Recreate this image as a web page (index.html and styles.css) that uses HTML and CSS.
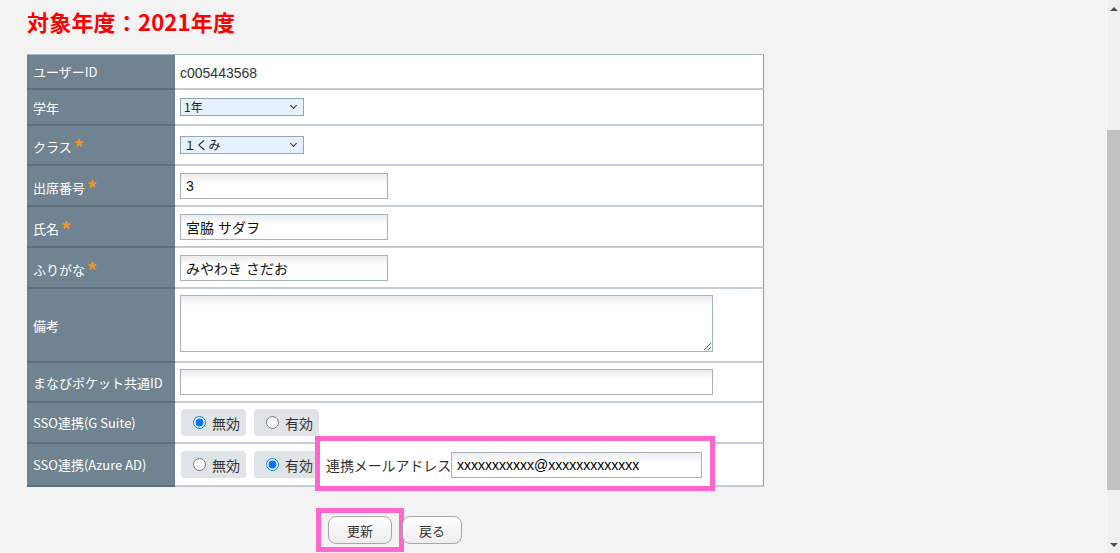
FILE: index.html
```html
<!DOCTYPE html>
<html lang="ja">
<head>
    <meta charset="UTF-8">
    <meta name="viewport" content="width=device-width, initial-scale=1.0">
    <title>生徒情報の編集</title>
    <link rel="stylesheet" href="styles.css">
</head>
<body>
    <div class="screen">
        <div class="page">
            <h1 class="year-title">対象年度：2021年度</h1>
            <form class="student-form">
                <table class="edit-table">
                    <tr class="h35">
                        <th>ユーザーID</th>
                        <td><span class="user-id">c005443568</span></td>
                    </tr>
                    <tr class="h36">
                        <th>学年</th>
                        <td>
                            <span class="select-wrap">
                                <select name="grade"><option>1年</option></select>
                            </span>
                        </td>
                    </tr>
                    <tr class="h40">
                        <th>クラス<span class="req">*</span></th>
                        <td>
                            <span class="select-wrap">
                                <select name="class"><option>１くみ</option></select>
                            </span>
                        </td>
                    </tr>
                    <tr class="h41">
                        <th>出席番号<span class="req">*</span></th>
                        <td><input type="text" class="text-input" name="number" value="3"></td>
                    </tr>
                    <tr class="h41">
                        <th>氏名<span class="req">*</span></th>
                        <td><input type="text" class="text-input" name="name" value="宮脇 サダヲ"></td>
                    </tr>
                    <tr class="h41">
                        <th>ふりがな<span class="req">*</span></th>
                        <td><input type="text" class="text-input" name="kana" value="みやわき さだお"></td>
                    </tr>
                    <tr class="h74">
                        <th>備考</th>
                        <td><textarea class="note" name="note"></textarea></td>
                    </tr>
                    <tr class="h40">
                        <th>まなびポケット共通ID</th>
                        <td><input type="text" class="text-input wide" name="pocket-id"></td>
                    </tr>
                    <tr class="h41">
                        <th>SSO連携(G Suite)</th>
                        <td>
                            <div class="radio-group">
                                <label class="radio-pill"><input type="radio" name="sso-google" checked>無効</label>
                                <label class="radio-pill"><input type="radio" name="sso-google">有効</label>
                            </div>
                        </td>
                    </tr>
                    <tr class="h43">
                        <th>SSO連携(Azure AD)</th>
                        <td>
                            <div class="radio-group">
                                <label class="radio-pill"><input type="radio" name="sso-azure">無効</label>
                                <label class="radio-pill"><input type="radio" name="sso-azure" checked>有効</label>
                                <span class="mark mark-email">
                                    <span class="email-label">連携メールアドレス</span>
                                    <input type="text" class="text-input email" name="email" value="xxxxxxxxxxx@xxxxxxxxxxxxx">
                                </span>
                            </div>
                        </td>
                    </tr>
                </table>
                <div class="actions">
                    <span class="mark mark-button"><button type="submit">更新</button></span>
                    <button type="button">戻る</button>
                </div>
            </form>
        </div>
        <div class="scrollbar">
            <div class="sb-arrow up"></div>
            <div class="sb-track"><div class="sb-thumb"></div></div>
            <div class="sb-arrow down"></div>
        </div>
    </div>
</body>
</html>
```

FILE: styles.css
```css
html, body {
    margin: 0;
    padding: 0;
    height: 100%;
    overflow: hidden;
    background-color: #ffffff;
}
body {
    font-family: "Noto Sans CJK JP", "Noto Sans", sans-serif;
    color: #333333;
}
.screen {
    display: flex;
    height: 553px;
}
.page {
    flex: 1;
    background-color: #f3f3f3;
    padding: 6px 0 0 27px;
    border-left: 1px solid #ffffff;
    margin-left: -1px;
}
.year-title {
    margin: 0 0 18px 0;
    font-size: 22px;
    line-height: 30px;
    font-weight: bold;
    letter-spacing: 0.2px;
    color: #ff0000;
}

/* form table */
.edit-table {
    width: 737px;
    border-collapse: separate;
    border-spacing: 0;
    border-top: 1px solid #a9b5bf;
}
.edit-table th,
.edit-table td {
    box-sizing: border-box;
    padding: 0;
    vertical-align: middle;
}
.edit-table th {
    width: 148px;
    padding-left: 6px;
    background-color: #6f8391;
    color: #ffffff;
    font-size: 13px;
    font-weight: normal;
    text-align: left;
    border-bottom: 2px solid #5b6f7d;
}
.edit-table td {
    padding-left: 5px;
    background-color: #ffffff;
    border-bottom: 2px solid #c3cdd5;
    border-right: 1px solid #8e9ca8;
    font-size: 14px;
}
.h35 th, .h35 td { height: 35px; }
.h36 th, .h36 td { height: 36px; }
.h40 th, .h40 td { height: 40px; }
.h41 th, .h41 td { height: 41px; }
.h43 th, .h43 td { height: 43px; }
.h74 th, .h74 td { height: 74px; }

.req {
    position: relative;
    top: 3px;
    color: #f7941d;
    font-size: 20px;
    font-weight: bold;
    line-height: 1;
    margin-left: 2px;
}
.user-id {
    font-family: "Liberation Sans", "Noto Sans CJK JP", sans-serif;
    font-size: 14px;
    color: #333333;
}

/* selects */
.select-wrap {
    position: relative;
    display: inline-block;
    vertical-align: middle;
}
.select-wrap select {
    appearance: none;
    -webkit-appearance: none;
    box-sizing: border-box;
    width: 124px;
    height: 18px;
    padding: 0 0 0 3px;
    border: 1px solid #93a6b7;
    border-radius: 0;
    background-color: #e7f1fb;
    font-family: "Noto Sans CJK JP", sans-serif;
    font-size: 12px;
    line-height: 16px;
    color: #222222;
    vertical-align: top;
}
.select-wrap::after {
    content: "";
    position: absolute;
    right: 8px;
    top: 5px;
    width: 4px;
    height: 4px;
    border-right: 1.5px solid #333333;
    border-bottom: 1.5px solid #333333;
    transform: rotate(45deg);
    pointer-events: none;
}

/* text inputs */
.text-input,
.note {
    box-sizing: border-box;
    border: 1px solid #a5b1bc;
    background: linear-gradient(to bottom, #ececec 0, #ffffff 10px);
    font-family: "Liberation Sans", "Noto Sans CJK JP", sans-serif;
    font-size: 14px;
    color: #111111;
    outline: none;
}
.text-input {
    width: 208px;
    height: 26px;
    padding: 0 5px;
    vertical-align: middle;
}
.text-input.wide {
    width: 533px;
}
.note {
    display: block;
    width: 533px;
    height: 57px;
    margin: 0 0 3px 0;
    padding: 4px 5px;
    resize: vertical;
}

/* radio pills */
.radio-group {
    display: flex;
    align-items: center;
    gap: 8px;
    padding-left: 1px;
}
.radio-pill {
    display: inline-flex;
    align-items: center;
    box-sizing: border-box;
    height: 27px;
    padding: 0 6px 0 12px;
    background-color: #dfe4e8;
    border-radius: 4px;
    font-size: 14px;
    color: #333333;
}
.radio-pill input {
    width: 13px;
    height: 13px;
    margin: 0 6px 0 0;
}

/* highlighted annotation boxes */
.mark {
    outline: 5px solid #ff66cc;
}
.mark-email {
    display: flex;
    align-items: center;
    background-color: #ffffff;
    padding: 11px 8px 8px 6px;
    margin: -11px -8px -8px -7px;
}
.email-label {
    font-size: 14px;
    letter-spacing: -0.1px;
    color: #333333;
    white-space: nowrap;
}
.text-input.email {
    width: 251px;
    color: #000000;
}
.mark-button {
    display: inline-block;
    padding: 3px 7px;
    margin: -3px -7px;
}

/* buttons */
.actions {
    display: flex;
    gap: 10px;
    margin-top: 29px;
    padding-left: 301px;
}
.actions button {
    box-sizing: border-box;
    width: 60px;
    height: 28px;
    padding: 0;
    border: 1px solid #a6a6a6;
    border-radius: 8px;
    background: linear-gradient(to bottom, #ffffff, #ededed);
    font-family: "Noto Sans CJK JP", sans-serif;
    font-size: 13px;
    color: #333333;
}
.mark-button button {
    width: 64px;
    display: block;
}

/* scrollbar */
.scrollbar {
    width: 13px;
    display: flex;
    flex-direction: column;
    background-color: #f0f0f0;
    border-left: 1px solid #f7f7f7;
}
.sb-arrow {
    height: 17px;
    display: flex;
    align-items: center;
    justify-content: center;
}
.sb-arrow.up::before {
    content: "";
    border-left: 4px solid transparent;
    border-right: 4px solid transparent;
    border-bottom: 4px solid #505050;
}
.sb-arrow.down::before {
    content: "";
    border-left: 4px solid transparent;
    border-right: 4px solid transparent;
    border-top: 4px solid #505050;
}
.sb-track {
    flex: 1;
    padding-top: 113px;
}
.sb-thumb {
    height: 360px;
    background-color: #c1c1c1;
}
```
